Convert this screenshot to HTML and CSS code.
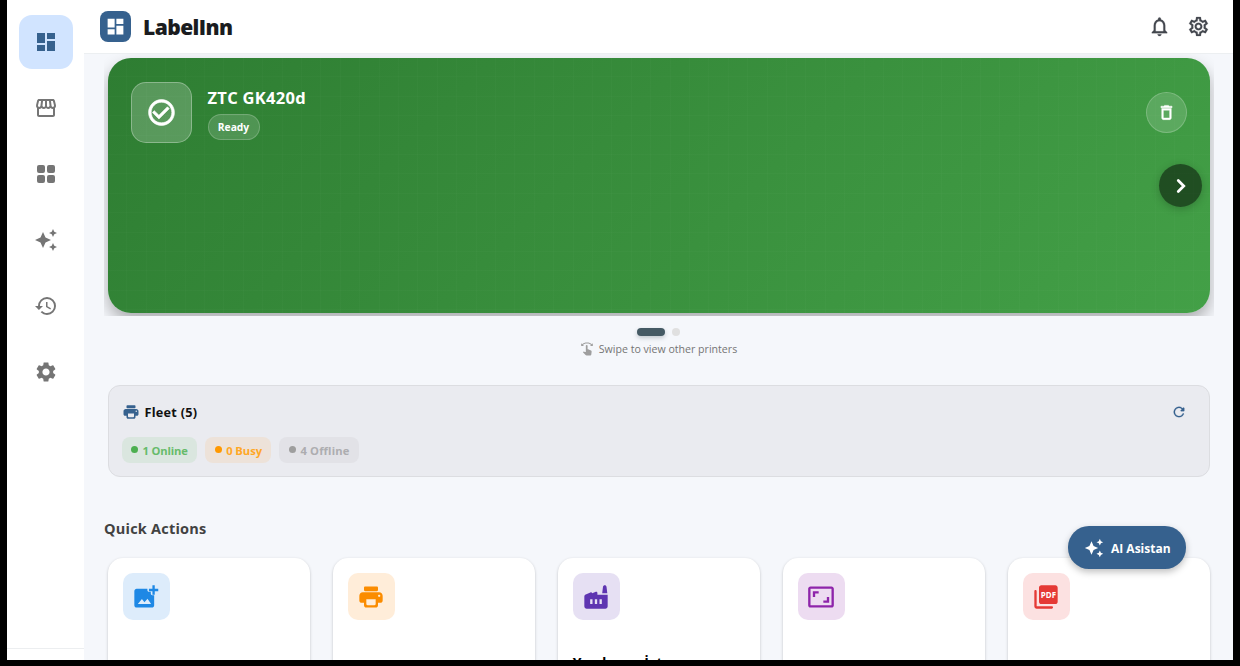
FILE: index.html
```
<!DOCTYPE html>
<html lang="en">
<head>
  <meta charset="UTF-8" />
  <meta name="viewport" content="width=device-width, initial-scale=1" />
  <title>LabelInn</title>
  <link rel="stylesheet" href="styles.css">
</head>
<body>
  <!-- shared icons -->
  <svg class="sprite" aria-hidden="true">
    <symbol id="i-dashboard" viewBox="0 0 24 24"><path d="M3 13h8V3H3v10zm0 8h8v-6H3v6zm10 0h8V11h-8v10zm0-18v6h8V3h-8z"/></symbol>
    <symbol id="i-sparkle" viewBox="0 0 24 24"><path d="M19 9l1.25-2.75L23 5l-2.75-1.25L19 1l-1.25 2.75L15 5l2.75 1.25L19 9zm-7.5.5L9 4 6.5 9.5 1 12l5.5 2.5L9 20l2.5-5.5L17 12l-5.5-2.5zM19 15l-1.25 2.75L15 19l2.75 1.25L19 23l1.25-2.75L23 19l-2.75-1.25L19 15z"/></symbol>
    <symbol id="i-print" viewBox="0 0 24 24"><path d="M19 8H5c-1.66 0-3 1.34-3 3v4c0 1.1.9 2 2 2h2v2c0 1.1.9 2 2 2h8c1.1 0 2-.9 2-2v-2h2c1.1 0 2-.9 2-2v-4c0-1.66-1.34-3-3-3zm-4 11H9c-.55 0-1-.45-1-1v-4h8v4c0 .55-.45 1-1 1zm4-7c-.55 0-1-.45-1-1s.45-1 1-1 1 .45 1 1-.45 1-1 1zm-2-9H7c-.55 0-1 .45-1 1v2c0 .55.45 1 1 1h10c.55 0 1-.45 1-1V4c0-.55-.45-1-1-1z"/></symbol>
  </svg>

  <div class="app">
    <nav class="sidebar">
      <div class="nav-items">
        <a class="nav-item active"><svg><use href="#i-dashboard"/></svg></a>
        <a class="nav-item"><svg viewBox="0 0 24 24"><path d="M21.9 8.89l-1.05-4.37c-.22-.9-1-1.52-1.91-1.52H5.05c-.9 0-1.69.63-1.9 1.52L2.1 8.89c-.24 1.02-.02 2.06.62 2.88.08.11.19.19.28.29V19c0 1.1.9 2 2 2h14c1.1 0 2-.9 2-2v-6.94c.09-.09.2-.18.28-.28.64-.82.87-1.87.62-2.89zm-2.99-3.9l1.05 4.37c.1.42.01.84-.25 1.17-.14.18-.44.47-.94.47-.61 0-1.14-.49-1.21-1.14L16.98 5l1.93-.01zM13 5h1.96l.54 4.52c.05.39-.07.78-.33 1.07-.22.26-.54.41-.95.41-.67 0-1.22-.59-1.22-1.31V5zM8.49 9.52L9.04 5H11v4.69c0 .72-.55 1.31-1.29 1.31-.34 0-.65-.15-.89-.41-.25-.29-.37-.68-.33-1.07zm-4.45-.16L5.05 5h1.97l-.58 4.86c-.08.65-.6 1.14-1.21 1.14-.49 0-.8-.29-.93-.47-.27-.32-.36-.75-.26-1.17zM5 19v-6.03c.08.01.15.03.23.03.87 0 1.66-.36 2.24-.95.6.6 1.4.95 2.31.95.87 0 1.65-.36 2.23-.93.59.57 1.39.93 2.29.93.84 0 1.64-.35 2.24-.95.58.59 1.37.95 2.24.95.08 0 .15-.02.23-.03V19H5z"/></svg></a>
        <a class="nav-item"><svg viewBox="0 0 24 24"><rect x="3" y="3" width="8" height="8" rx="2"/><rect x="13" y="3" width="8" height="8" rx="2"/><rect x="3" y="13" width="8" height="8" rx="2"/><rect x="13" y="13" width="8" height="8" rx="2"/></svg></a>
        <a class="nav-item"><svg><use href="#i-sparkle"/></svg></a>
        <a class="nav-item"><svg viewBox="0 0 24 24"><path d="M13 3a9 9 0 0 0-9 9H1l3.89 3.89.07.14L9 12H6c0-3.87 3.13-7 7-7s7 3.13 7 7-3.13 7-7 7c-1.93 0-3.68-.79-4.94-2.06l-1.42 1.42A8.95 8.95 0 0 0 13 21a9 9 0 0 0 0-18zm-1 5v5l4.28 2.54.72-1.21-3.5-2.08V8H12z"/></svg></a>
        <a class="nav-item"><svg viewBox="0 0 24 24"><path d="M19.14 12.94c.04-.3.06-.61.06-.94 0-.32-.02-.64-.07-.94l2.03-1.58c.18-.14.23-.41.12-.61l-1.92-3.32c-.12-.22-.37-.29-.59-.22l-2.39.96c-.5-.38-1.03-.7-1.62-.94l-.36-2.54c-.04-.24-.24-.41-.48-.41h-3.84c-.24 0-.43.17-.47.41l-.36 2.54c-.59.24-1.13.57-1.62.94l-2.39-.96c-.22-.08-.47 0-.59.22L2.74 8.87c-.12.21-.08.47.12.61l2.03 1.58c-.05.3-.09.63-.09.94s.02.64.07.94l-2.03 1.58c-.18.14-.23.41-.12.61l1.92 3.32c.12.22.37.29.59.22l2.39-.96c.5.38 1.03.7 1.62.94l.36 2.54c.05.24.24.41.48.41h3.84c.24 0 .44-.17.47-.41l.36-2.54c.59-.24 1.13-.56 1.62-.94l2.39.96c.22.08.47 0 .59-.22l1.92-3.32c.12-.22.07-.47-.12-.61l-2.01-1.58zM12 15.6c-1.98 0-3.6-1.62-3.6-3.6s1.62-3.6 3.6-3.6 3.6 1.62 3.6 3.6-1.62 3.6-3.6 3.6z"/></svg></a>
      </div>
      <div class="nav-footer"></div>
    </nav>

    <div class="main">
      <header class="topbar">
        <div class="logo"><svg><use href="#i-dashboard"/></svg></div>
        <h1>LabelInn</h1>
        <div class="topbar-actions">
          <svg viewBox="0 0 24 24"><path d="M12 22c1.1 0 2-.9 2-2h-4c0 1.1.9 2 2 2zm6-6v-5c0-3.07-1.63-5.64-4.5-6.32V4c0-.83-.67-1.5-1.5-1.5s-1.5.67-1.5 1.5v.68C7.64 5.36 6 7.92 6 11v5l-2 2v1h16v-1l-2-2zm-2 1H8v-6c0-2.48 1.51-4.5 4-4.5s4 2.02 4 4.5v6z"/></svg>
          <svg viewBox="0 0 24 24"><path d="M19.43 12.98c.04-.32.07-.64.07-.98 0-.34-.03-.66-.07-.98l2.11-1.65c.19-.15.24-.42.12-.64l-2-3.46c-.09-.16-.26-.25-.44-.25-.06 0-.12.01-.17.03l-2.49 1c-.52-.4-1.08-.73-1.69-.98l-.38-2.65C14.46 2.18 14.25 2 14 2h-4c-.25 0-.46.18-.49.42l-.38 2.65c-.61.25-1.17.59-1.69.98l-2.49-1c-.06-.02-.12-.03-.18-.03-.17 0-.34.09-.43.25l-2 3.46c-.13.22-.07.49.12.64l2.11 1.65c-.04.32-.07.65-.07.98 0 .33.03.66.07.98l-2.11 1.65c-.19.15-.24.42-.12.64l2 3.46c.09.16.26.25.44.25.06 0 .12-.01.17-.03l2.49-1c.52.4 1.08.73 1.69.98l.38 2.65c.03.24.24.42.49.42h4c.25 0 .46-.18.49-.42l.38-2.65c.61-.25 1.17-.59 1.69-.98l2.49 1c.06.02.12.03.18.03.17 0 .34-.09.43-.25l2-3.46c.12-.22.07-.49-.12-.64l-2.11-1.65zm-1.98-1.71c.04.31.05.52.05.73 0 .21-.02.43-.05.73l-.14 1.13.89.7 1.08.84-.7 1.21-1.27-.51-1.04-.42-.9.68c-.43.32-.84.56-1.25.73l-1.06.43-.16 1.13-.2 1.35h-1.4l-.19-1.35-.16-1.13-1.06-.43c-.43-.18-.83-.41-1.23-.71l-.91-.7-1.06.43-1.27.51-.7-1.21 1.08-.84.89-.7-.14-1.13c-.03-.31-.05-.54-.05-.74s.02-.43.05-.73l.14-1.13-.89-.7-1.08-.84.7-1.21 1.27.51 1.04.42.9-.68c.43-.32.84-.56 1.25-.73l1.06-.43.16-1.13.2-1.35h1.39l.19 1.35.16 1.13 1.06.43c.43.18.83.41 1.23.71l.91.7 1.06-.43 1.27-.51.7 1.21-1.07.85-.89.7.14 1.13zM12 8c-2.21 0-4 1.79-4 4s1.79 4 4 4 4-1.79 4-4-1.79-4-4-4zm0 6c-1.1 0-2-.9-2-2s.9-2 2-2 2 .9 2 2-.9 2-2 2z"/></svg>
        </div>
      </header>

      <div class="carousel">
        <section class="printer-card">
          <div class="status-icon"><svg viewBox="0 0 24 24"><path d="M16.59 7.58L10 14.17l-3.59-3.58L5 12l5 5 8-8zM12 2C6.48 2 2 6.48 2 12s4.48 10 10 10 10-4.48 10-10S17.52 2 12 2zm0 18c-4.42 0-8-3.58-8-8s3.58-8 8-8 8 3.58 8 8-3.58 8-8 8z"/></svg></div>
          <div class="printer-info">
            <h2>ZTC GK420d</h2>
            <span class="badge">Ready</span>
          </div>
          <div class="delete-btn"><svg viewBox="0 0 24 24"><path d="M6 19c0 1.1.9 2 2 2h8c1.1 0 2-.9 2-2V7H6v12zM8 9h8v10H8V9zm7.5-5l-1-1h-5l-1 1H5v2h14V4z"/></svg></div>
        </section>
        <div class="next-btn"><svg viewBox="0 0 24 24"><path d="M9 6l6 6-6 6"/></svg></div>
      </div>

      <div class="dots"><span class="dot current"></span><span class="dot"></span></div>
      <p class="hint">
        <svg viewBox="0 0 24 24"><path d="M18.89 14.75l-4.09-2.04c-.28-.14-.58-.21-.89-.21H13v-6c0-.83-.67-1.5-1.5-1.5S10 5.67 10 6.5v10.74l-3.25-.74c-.33-.07-.68.03-.92.28l-.83.84 4.54 4.79c.38.38 1.14.59 1.67.59h6.16c1 0 1.84-.73 1.98-1.72l.63-4.46c.12-.85-.32-1.69-1.09-2.07zM20.13 3.87C18.69 2.17 15.6 1 12 1S5.31 2.17 3.87 3.87L2 2v5h5L4.93 4.93c1-1.29 3.7-2.43 7.07-2.43s6.07 1.14 7.07 2.43L17 7h5V2l-1.87 1.87z"/></svg>
        <span>Swipe to view other printers</span>
      </p>

      <section class="fleet">
        <div class="fleet-head">
          <svg class="fleet-icon"><use href="#i-print"/></svg>
          <h3>Fleet (5)</h3>
          <svg class="refresh" viewBox="0 0 24 24"><path d="M17.65 6.35c-1.63-1.63-3.94-2.57-6.48-2.31-3.67.37-6.69 3.35-7.1 7.02C3.52 15.91 7.27 20 12 20c3.19 0 5.93-1.87 7.21-4.56.32-.67-.16-1.44-.9-1.44-.37 0-.72.2-.88.53-1.13 2.43-3.84 3.97-6.8 3.31-2.22-.49-4.01-2.3-4.48-4.52C5.31 9.44 8.26 6 12 6c1.66 0 3.14.69 4.22 1.78l-1.51 1.51c-.63.63-.19 1.71.7 1.71H19c.55 0 1-.45 1-1V6.41c0-.89-1.08-1.34-1.71-.71l-.64.65z"/></svg>
        </div>
        <div class="chips">
          <span class="chip online">1 Online</span>
          <span class="chip busy">0 Busy</span>
          <span class="chip offline">4 Offline</span>
        </div>
      </section>

      <h3 class="section-title">Quick Actions</h3>
      <div class="actions">
        <div class="action">
          <div class="tile blue"><svg viewBox="0 0 24 24"><path fill-rule="evenodd" d="M4 5h9.2v1.2c0 .7.5 1.3 1.3 1.3h1.6v1.6c0 .8.6 1.4 1.4 1.4H19V19c0 1.1-.9 2-2 2H4c-1.1 0-2-.9-2-2V7c0-1.1.9-2 2-2zm1 13h11.4l-3.1-4.6-2.6 3.1-2.2-2.8z"/><path d="M17.5 2h2v3h3v2h-3v3h-2V7h-3V5h3z"/></svg></div>
        </div>
        <div class="action">
          <div class="tile orange"><svg><use href="#i-print"/></svg></div>
        </div>
        <div class="action">
          <div class="tile violet"><svg viewBox="0 0 24 24"><path fill-rule="evenodd" d="M2 11.6c0-.8.5-1.5 1.2-1.8l4-1.7c.7-.3 1.4.1 1.6.7l3-1.2c.7-.3 1.4.2 1.4.9V10H22v10c0 1.1-.9 2-2 2H4c-1.1 0-2-.9-2-2zM7 14v4h2v-4zm4 0v4h2v-4zm4 0v4h2v-4zM17.3 8.7l.7-5.4c.1-.7.7-1.3 1.5-1.3s1.4.6 1.5 1.3l.7 5.4z"/></svg></div>
          <h4>Yazdırma İstasyonu</h4>
        </div>
        <div class="action">
          <div class="tile purple"><svg viewBox="0 0 24 24"><path d="M19 12h-2v3h-3v2h5v-5zM7 9h3V7H5v5h2V9zm14-6H3c-1.1 0-2 .9-2 2v14c0 1.1.9 2 2 2h18c1.1 0 2-.9 2-2V5c0-1.1-.9-2-2-2zm0 16.01H3V4.99h18v14.02z"/></svg></div>
        </div>
        <div class="action">
          <div class="tile red"><svg viewBox="0 0 24 24"><path d="M20 2H8c-1.1 0-2 .9-2 2v12c0 1.1.9 2 2 2h12c1.1 0 2-.9 2-2V4c0-1.1-.9-2-2-2zM3 6c-.55 0-1 .45-1 1v13c0 1.1.9 2 2 2h13c.55 0 1-.45 1-1s-.45-1-1-1H4V7c0-.55-.45-1-1-1z"/><text x="14.1" y="12.9" textLength="13" lengthAdjust="spacingAndGlyphs">PDF</text></svg></div>
        </div>
      </div>
    </div>

    <div class="fab"><svg><use href="#i-sparkle"/></svg><span>AI Asistan</span></div>
  </div>
</body>
</html>
```

FILE: styles.css
```
* { box-sizing: border-box; }
body { margin: 0; height: 666px; overflow: hidden; background: #000; font-family: "Open Sans", "Noto Sans", sans-serif; color: #1a1c20; }
h1, h2, h3, h4, p { margin: 0; }
svg { display: block; fill: currentColor; flex: none; }
.sprite { display: none; }

.app { position: relative; display: flex; height: 660px; margin: 0 7px; overflow: hidden; background: #fff; }

/* sidebar */
.sidebar { width: 77px; flex: none; display: flex; flex-direction: column; justify-content: space-between; background: #fff; }
.nav-items { display: flex; flex-direction: column; align-items: center; gap: 12px; padding-top: 14.5px; }
.nav-item { width: 54px; height: 54px; border-radius: 13px; display: flex; align-items: center; justify-content: center; color: #757575; }
.nav-item svg { width: 24px; height: 24px; }
.nav-item.active { background: #d1e4ff; color: #36618e; }
.nav-footer { height: 12px; border-top: 1px solid #eceef0; }

/* top bar */
.main { flex: 1; min-width: 0; background: #f5f7fb; }
.topbar { height: 54px; display: flex; align-items: center; padding: 0 23px 0 16px; background: #fff; border-bottom: 1px solid #eceff1; }
.logo { width: 31px; height: 31px; border-radius: 8px; background: #36618e; color: #fff; display: flex; align-items: center; justify-content: center; }
.logo svg { width: 21px; height: 21px; }
.topbar h1 { margin-left: 12px; font-size: 21px; font-weight: 800; line-height: 30px; letter-spacing: -0.55px; }
.topbar-actions { margin-left: auto; display: flex; gap: 16px; color: #43474e; }
.topbar-actions svg { width: 23px; height: 23px; stroke: currentColor; stroke-width: .2; }

/* printer carousel, clips the card shadow */
.carousel { position: relative; height: 262px; margin: 0 19px 0 20px; padding: 4px; overflow: hidden; }
.printer-card {
  height: 254.5px; border-radius: 23px; padding: 24px 23px; display: flex; color: #fff;
  background:
    repeating-linear-gradient(90deg, transparent 0 18.4px, rgba(255,255,255,.015) 18.4px 19.4px),
    repeating-linear-gradient(180deg, transparent 0 18.4px, rgba(255,255,255,.015) 18.4px 19.4px),
    linear-gradient(135deg, #2e7d32, #43a047);
  box-shadow: 0 8px 16px rgba(0,0,0,.3);
}
.status-icon { width: 61px; height: 61px; border-radius: 15px; border: 1px solid rgba(255,255,255,.3); background: rgba(255,255,255,.2); display: flex; align-items: center; justify-content: center; }
.status-icon svg { width: 31px; height: 31px; stroke: currentColor; stroke-width: .5; }
.printer-info { margin-left: 15.5px; padding-top: 5px; }
.printer-info h2 { font-size: 16.5px; line-height: 22px; font-weight: 700; letter-spacing: 0.28px; }
.badge { display: block; width: 52px; height: 26px; margin-top: 5px; border-radius: 13px; border: 1px solid rgba(255,255,255,.2); background: rgba(255,255,255,.15); font-size: 10.3px; line-height: 25px; font-weight: 700; text-align: center; }
.delete-btn { width: 41px; height: 41px; margin: 10px 0 0 auto; border-radius: 50%; border: 1px solid rgba(255,255,255,.2); background: rgba(255,255,255,.15); display: flex; align-items: center; justify-content: center; }
.delete-btn svg { width: 19px; height: 19px; stroke: currentColor; stroke-width: .6; }
.next-btn { position: absolute; right: 12px; top: 110px; width: 43px; height: 43px; border-radius: 50%; background: rgba(0,0,0,.5); box-shadow: 0 2px 8px rgba(0,0,0,.2); color: #fff; display: flex; align-items: center; justify-content: center; }
.next-btn svg { width: 22px; height: 22px; fill: none; stroke: currentColor; stroke-width: 3; stroke-linecap: round; }

.dots { display: flex; justify-content: center; gap: 7px; margin-top: 12px; }
.dot { width: 8px; height: 8px; border-radius: 4px; background: #e0e0e0; }
.dot.current { width: 28px; background: #455a64; box-shadow: 0 2px 4px rgba(69,90,100,.3); }
.hint { display: flex; align-items: center; justify-content: center; gap: 5px; height: 16px; margin-top: 5px; color: #757575; font-size: 10.6px; }
.hint svg { width: 14px; height: 14px; color: #9e9e9e; }

/* fleet */
.fleet { height: 92px; margin: 27.5px 23px 0 23.5px; padding: 15.5px 13px; border: 1px solid #dcdde1; border-radius: 12px; background: #eaebf0; }
.fleet-head { display: flex; align-items: center; height: 22px; }
.fleet-icon { width: 18px; height: 18px; color: #36618e; }
.fleet-head h3 { margin-left: 5px; font-size: 12.7px; font-weight: 700; letter-spacing: 0.25px; color: #111; }
.refresh { width: 16px; height: 16px; margin: 0 9px 0 auto; color: #36618e; stroke: currentColor; stroke-width: .3; }
.chips { display: flex; gap: 8px; margin-top: 13.5px; }
.chip { display: flex; align-items: center; height: 26px; padding: 1px 9.5px 0; border-radius: 8px; font-size: 11.2px; font-weight: 700; }
.chip::before { content: ""; width: 7px; height: 7px; margin: 0 4.5px 2px 0; border-radius: 50%; }
.online { color: #66bb6a; background: #dae6df; letter-spacing: -0.15px; }
.online::before { background: #4caf50; }
.busy { color: #ffa726; background: #ede2d9; letter-spacing: -0.05px; }
.busy::before { background: #ff9800; }
.offline { color: #adadb0; background: #e2e2e7; letter-spacing: 0.15px; }
.offline::before { background: #9e9e9e; }

/* quick actions */
.section-title { margin: 41px 0 0 20px; font-size: 14.5px; line-height: 22px; font-weight: 700; letter-spacing: 0.22px; color: #424242; }
.actions { display: grid; grid-template-columns: repeat(5, 1fr); gap: 23px; margin: 18.5px 23px 0 23.5px; }
.action { height: 150px; padding: 15px; border-radius: 15px; background: #fff; box-shadow: 0 1px 3px rgba(0,0,0,.22); }
.action h4 { margin-top: 33px; font-size: 14px; line-height: 20px; font-weight: 700; letter-spacing: 0.25px; color: #000; white-space: nowrap; }
.tile { width: 47px; height: 47px; border-radius: 10px; display: flex; align-items: center; justify-content: center; }
.tile svg { width: 28px; height: 28px; }
.tile text { font-size: 6.8px; font-weight: 700; text-anchor: middle; fill: #fff; }
.blue { background: #ddecfb; color: #1e88e5; }
.orange { background: #ffedd9; color: #fb8c00; }
.violet { background: #e6e0f3; color: #5e35b1; }
.purple { background: #eddcf1; color: #8e24aa; }
.red { background: #fce1e1; color: #e53935; }

.fab { position: absolute; right: 47px; bottom: 91px; width: 118px; height: 43px; border-radius: 21px; background: #36618e; color: #fff; display: flex; align-items: center; padding-left: 16px; gap: 7px; box-shadow: 0 3px 7px rgba(0,0,0,.25); font-size: 12px; font-weight: 700; }
.fab svg { width: 20px; height: 20px; }
.fab span { padding-top: 2px; }
```
